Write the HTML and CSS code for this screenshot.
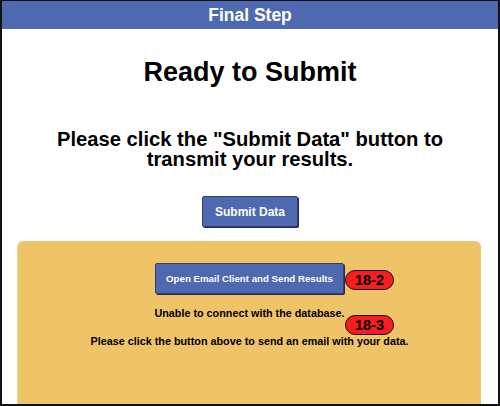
FILE: index.html
```html
<!DOCTYPE html>
<html>
<head>
<meta charset="utf-8">
<link rel="stylesheet" href="styles.css">
</head>
<body>
<div class="frame">
  <div class="header">Final Step</div>
  <h1 class="title">Ready to Submit</h1>
  <p class="lead">Please click the "Submit Data" button to<br>transmit your results.</p>
  <div class="actions"><button class="btn btn-submit">Submit Data</button></div>
  <div class="panel">
    <div class="email-row">
      <button class="btn btn-email">Open Email Client and Send Results</button>
      <span class="badge badge-a">18-2</span>
    </div>
    <p class="msg msg-err">Unable to connect with the database.<span class="badge badge-b">18-3</span></p>
    <p class="msg">Please click the button above to send an email with your data.</p>
  </div>
</div>
</body>
</html>
```
FILE: styles.css
```css
html, body { margin: 0; padding: 0; background: #fff; }
body { font-family: "Liberation Sans", Arial, sans-serif; }
.frame {
  width: 500px; height: 406px; box-sizing: border-box;
  border: 2px solid #111; border-top-width: 1px;
  overflow: hidden; display: flex; flex-direction: column;
}
.header {
  height: 28px; background: #4e69b0; color: #fff;
  font-weight: bold; font-size: 17.5px; line-height: 28px; text-align: center;
  flex: none;
}
.title {
  margin: 28px 0 0; font-size: 27px; line-height: 30px; text-align: center; color: #000;
}
.lead {
  margin: 42px 0 0; font-size: 20.2px; line-height: 20px; font-weight: bold; text-align: center; color: #000;
}
.actions { margin-top: 27px; display: flex; justify-content: center; flex: none; }
.btn {
  font-family: "Liberation Sans", Arial, sans-serif; font-weight: bold; color: #fff;
  background: #4e69b0; border: 1px solid #2e3f73; border-radius: 2px;
  box-shadow: 1px 1px 0 #1f2b52; cursor: pointer;
}
.btn-submit { width: 96px; height: 31px; font-size: 12px; padding: 0; }
.panel {
  margin: 14px 17px 0 15px; flex: 1; background: #efc469; border-radius: 6px 6px 0 0;
  border-left: 1px solid #f6d98f;
  padding-top: 22px; box-sizing: border-box;
}
.email-row { display: flex; justify-content: center; position: relative; }
.btn-email { width: 189px; height: 31px; font-size: 9.7px; padding: 0; }
.badge {
  position: absolute; width: 47px; height: 18px; box-sizing: content-box;
  background: #f51d1d; border: 1px solid #111; border-radius: 10px;
  font-weight: bold; font-size: 14.5px; line-height: 18px; text-align: center; color: #000;
}
.badge-a { left: 327px; top: 7px; }
.msg { margin: 0; font-size: 10.8px; font-weight: bold; text-align: center; color: #000; line-height: 13px; }
.msg-err { margin-top: 13px; position: relative; }
.badge-b { left: 327px; top: 8px; }
.msg + .msg { margin-top: 15px; }
```
